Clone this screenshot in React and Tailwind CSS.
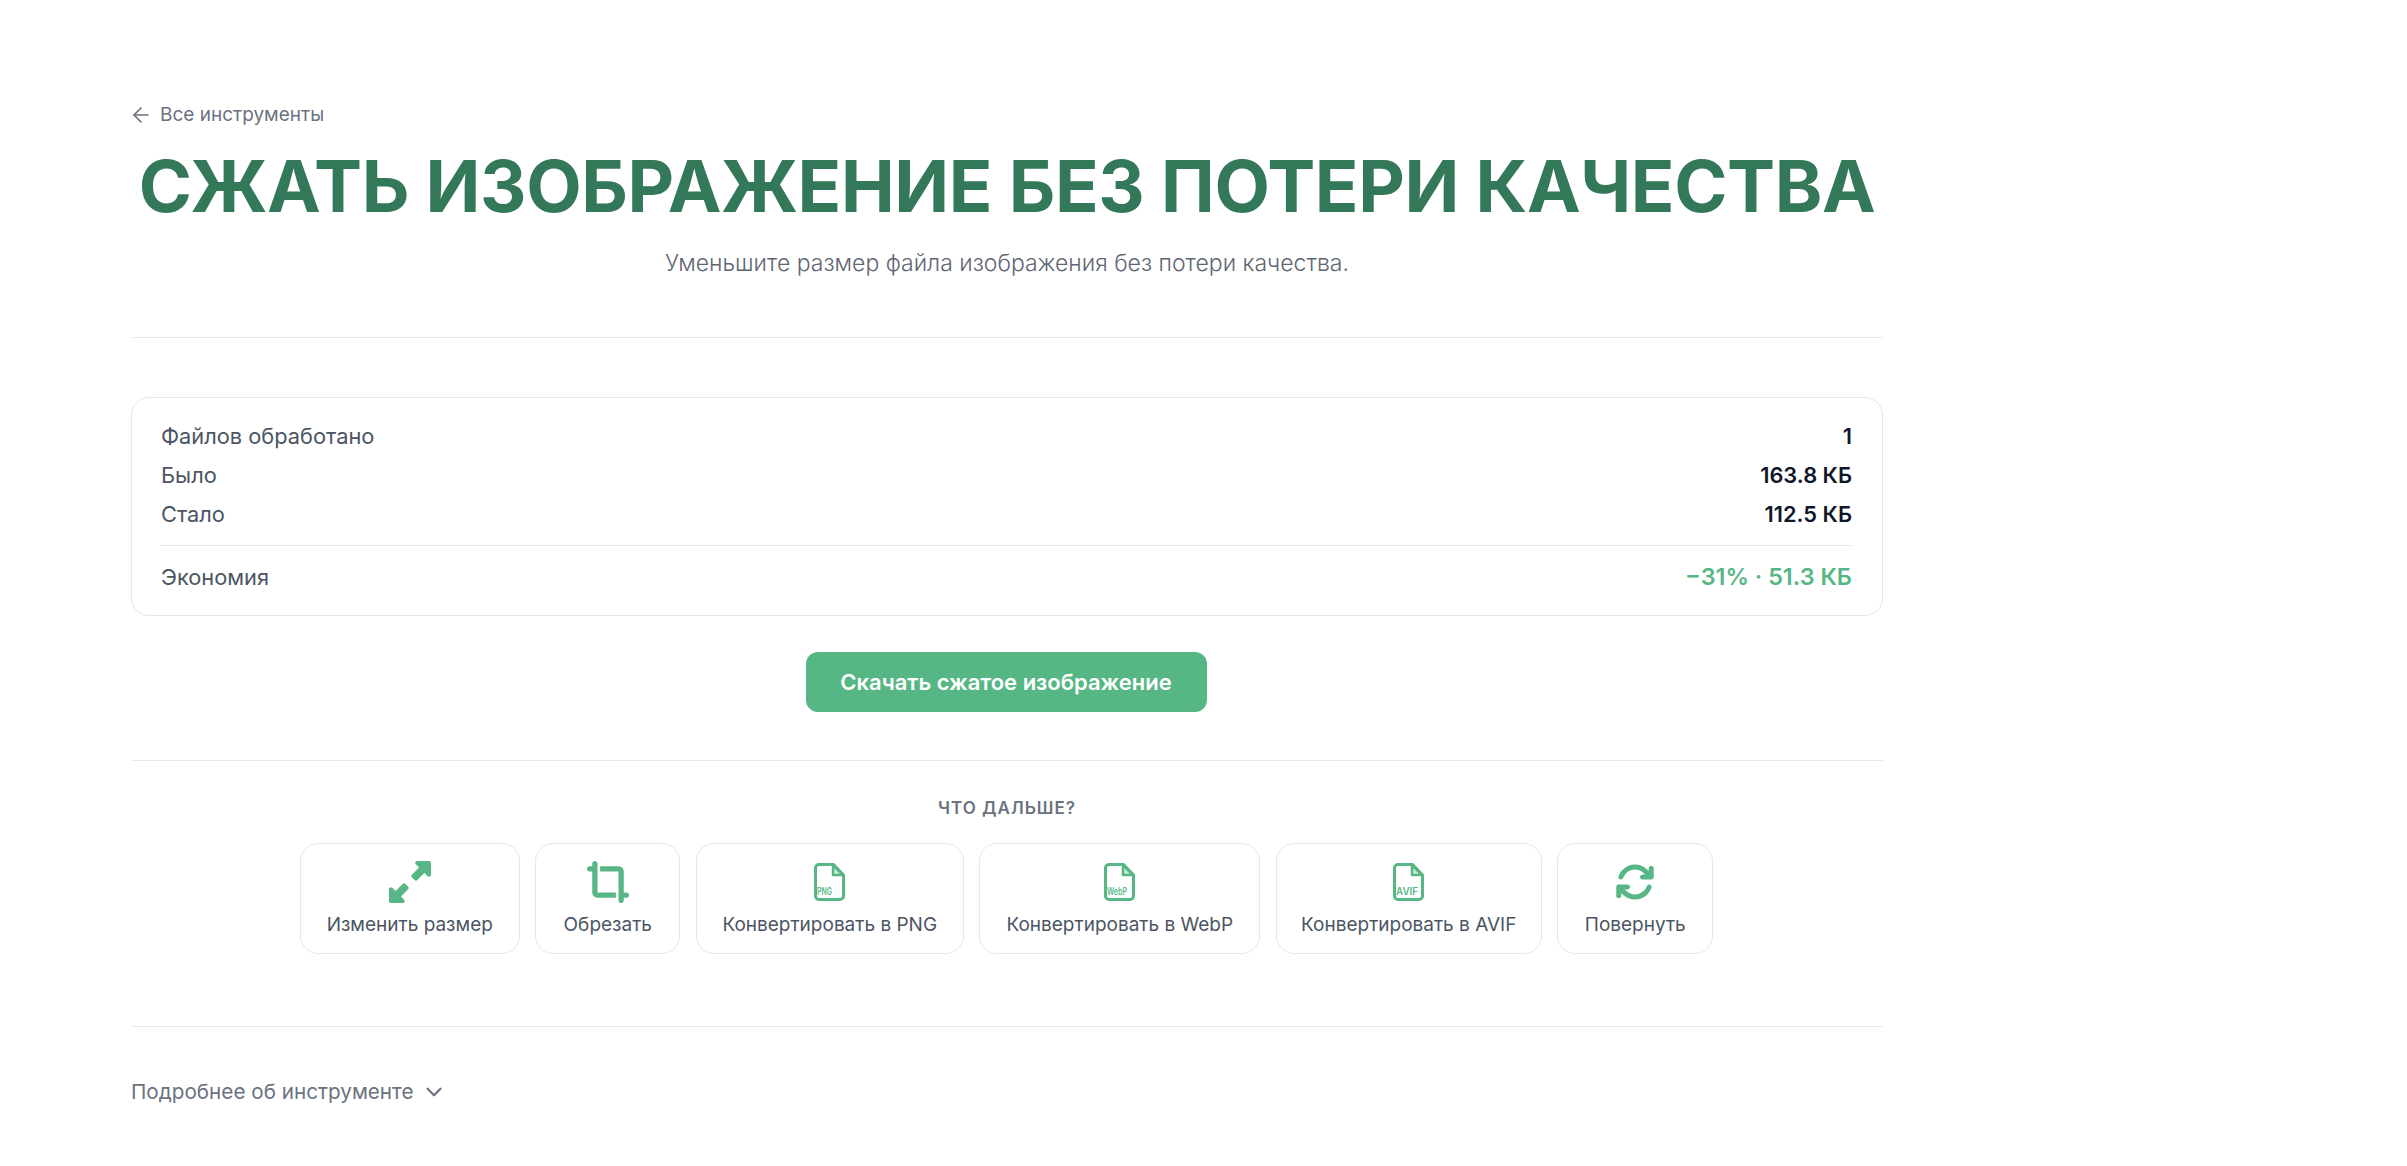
import React from "react";
import { ArrowLeft, ChevronDown } from "lucide-react";
import {
  FaUpRightAndDownLeftFromCenter,
  FaCropSimple,
  FaArrowsRotate,
} from "react-icons/fa6";

const FileIcon = ({ label, len }) => (
  <svg width="31" height="38" viewBox="0 0 31 38" fill="none" className="text-[#57b784]">
    <path
      d="M5 1.5h14.5L29.5 12v21a3.5 3.5 0 0 1-3.5 3.5H5A3.5 3.5 0 0 1 1.5 33V5A3.5 3.5 0 0 1 5 1.5z"
      stroke="currentColor"
      strokeWidth="3"
      strokeLinejoin="round"
    />
    <path d="M19 2v10h10z" fill="currentColor" fillOpacity="0.3" stroke="currentColor" strokeWidth="2.5" strokeLinejoin="round" />
    <text
      x="3"
      y="31.5"
      fontSize="10"
      fontWeight="600"
      fill="currentColor"
      fontFamily="Inter, sans-serif"
      textLength={len}
      lengthAdjust="spacingAndGlyphs"
    >
      {label}
    </text>
  </svg>
);

const nextTools = [
  { name: "Изменить размер", width: "w-[220px]", icon: <FaUpRightAndDownLeftFromCenter size={42} className="text-[#57b784]" /> },
  { name: "Обрезать", width: "w-[145px]", icon: <FaCropSimple size={42} className="text-[#57b784]" /> },
  { name: "Конвертировать в PNG", width: "w-[268px]", icon: <FileIcon label="PNG" len={15} /> },
  { name: "Конвертировать в WebP", width: "w-[281px]", icon: <FileIcon label="WebP" len={20} /> },
  { name: "Конвертировать в AVIF", width: "w-[266px]", icon: <FileIcon label="AVIF" len={22} /> },
  { name: "Повернуть", width: "w-[156px]", icon: <FaArrowsRotate size={40} className="text-[#57b784]" /> },
];

const stats = [
  { label: "Файлов обработано", value: "1" },
  { label: "Было", value: "163.8 КБ" },
  { label: "Стало", value: "112.5 КБ" },
];

export default function App() {
  return (
    <div className="min-h-screen bg-white font-['Inter',sans-serif] pl-[131px] pb-10">
      <div className="w-[1752px] flex flex-col">
        <a className="mt-[103px] h-6 -ml-[2px] flex items-center gap-[7px] text-[19px] text-[#6b7280]">
          <ArrowLeft size={24} strokeWidth={1.7} />
          Все инструменты
        </a>
        <h1 className="mt-[15px] h-[88px] leading-[88px] text-center text-[72px] font-bold uppercase tracking-[-0.4px] text-[#34785a] whitespace-nowrap">
          Сжать изображение без потери качества
        </h1>
        <p className="mt-[18px] h-[30px] leading-[30px] text-center text-[23px] font-light text-[#5f6673]">
          Уменьшите размер файла изображения без потери качества.
        </p>
        <div className="mt-[59px] border-t border-[#e8eaed]" />

        <div className="mt-[59px] h-[219px] border border-[#e5e7eb] rounded-[18px] pl-[29px] pr-[30px] pt-[19px]">
          {stats.map((s) => (
            <div key={s.label} className="h-[39px] flex items-center justify-between text-[21.8px]">
              <span className="text-[#4b5563]">{s.label}</span>
              <span className="font-semibold text-[#0f172a]">{s.value}</span>
            </div>
          ))}
          <div className="mt-[11px] border-t border-[#e5e7eb]" />
          <div className="mt-[10px] h-[42px] flex items-center justify-between">
            <span className="text-[21.8px] text-[#4b5563]">Экономия</span>
            <span className="text-[23.4px] font-semibold text-[#57b784]">−31% · 51.3 КБ</span>
          </div>
        </div>

        <button className="mt-[36px] mr-[2px] self-center w-[401px] h-[60px] rounded-xl bg-[#57b784] text-white text-[22px] font-semibold">
          Скачать сжатое изображение
        </button>

        <div className="mt-[48px] border-t border-[#e8eaed]" />

        <div className="mt-[35px] h-[24px] leading-[24px] text-center text-[17px] font-semibold uppercase tracking-[1px] text-[#6b7280]">
          Что дальше?
        </div>

        <div className="mt-[23px] mr-[1px] flex justify-center gap-[15.5px]">
          {nextTools.map((t) => (
            <a
              key={t.name}
              className={`${t.width} h-[111px] border border-[#e5e7eb] rounded-[18px] flex flex-col items-center pt-[16px]`}
            >
              <div className="h-[44px] flex items-center justify-center">{t.icon}</div>
              <span className="mt-[7px] text-[19px] text-[#4b5563] whitespace-nowrap">{t.name}</span>
            </a>
          ))}
        </div>

        <div className="mt-[72px] border-t border-[#e8eaed]" />

        <button className="mt-[50px] h-[30px] flex items-center gap-2 text-[20.7px] text-[#6b7280]">
          Подробнее об инструменте
          <ChevronDown size={26} />
        </button>
      </div>
    </div>
  );
}
